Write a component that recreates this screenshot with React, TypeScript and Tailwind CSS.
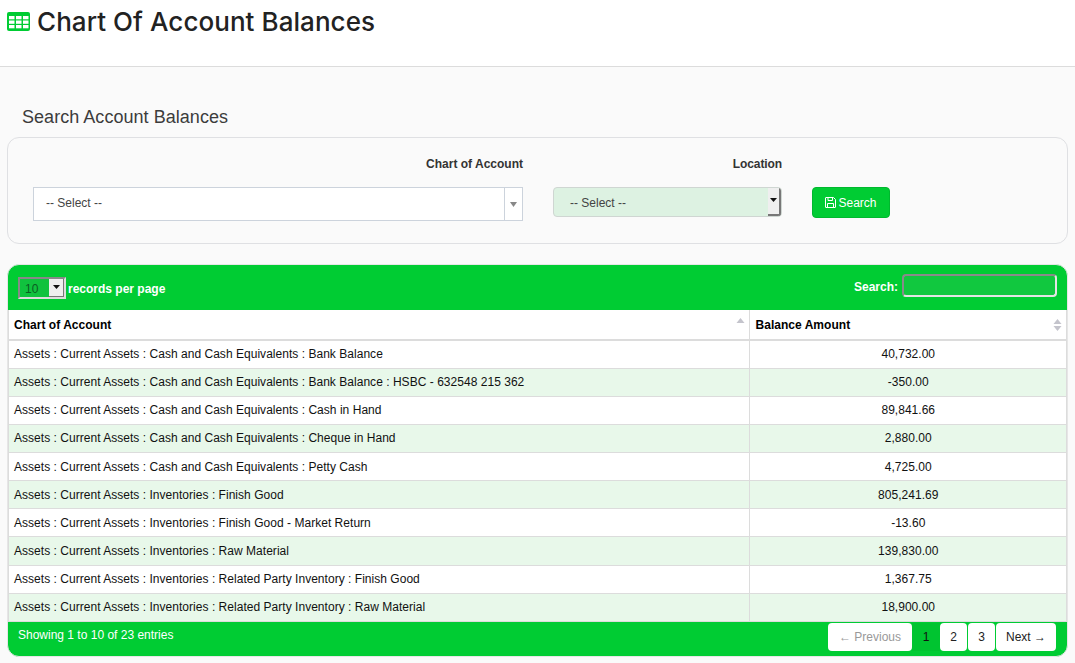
import React from "react";

const ROWS = [
  ["Assets : Current Assets : Cash and Cash Equivalents : Bank Balance", "40,732.00"],
  ["Assets : Current Assets : Cash and Cash Equivalents : Bank Balance : HSBC - 632548 215 362", "-350.00"],
  ["Assets : Current Assets : Cash and Cash Equivalents : Cash in Hand", "89,841.66"],
  ["Assets : Current Assets : Cash and Cash Equivalents : Cheque in Hand", "2,880.00"],
  ["Assets : Current Assets : Cash and Cash Equivalents : Petty Cash", "4,725.00"],
  ["Assets : Current Assets : Inventories : Finish Good", "805,241.69"],
  ["Assets : Current Assets : Inventories : Finish Good - Market Return", "-13.60"],
  ["Assets : Current Assets : Inventories : Raw Material", "139,830.00"],
  ["Assets : Current Assets : Inventories : Related Party Inventory : Finish Good", "1,367.75"],
  ["Assets : Current Assets : Inventories : Related Party Inventory : Raw Material", "18,900.00"],
];

const TableIcon = () => (
  <svg width="23" height="19" viewBox="0 0 23 19" className="shrink-0 -mt-[1px]">
    <rect x="0" y="0" width="23" height="19" rx="2" fill="#00cc33" />
    <g fill="#fff">
      {[4, 8.5, 13].map((y) =>
        [2, 9, 16].map((x) => <rect key={`${x}-${y}`} x={x} y={y} width="5.5" height="3.3" />)
      )}
    </g>
  </svg>
);

const SaveIcon = () => (
  <svg width="11" height="11" viewBox="0 0 11 11" fill="none" stroke="#fff" strokeWidth="1" className="mr-[2px]">
    <path d="M1 .5h7.5L10.5 2.5V10a.5.5 0 0 1-.5.5H1a.5.5 0 0 1-.5-.5V1A.5.5 0 0 1 1 .5Z" />
    <path d="M3 .5v3h4.5v-3M2.5 10.5V6.5h6v4" />
  </svg>
);

const SortBoth = () => (
  <svg width="9" height="14" viewBox="0 0 9 14" className="shrink-0">
    <path d="M4.5 1 8.5 6h-8Z" fill="#c4c4cc" />
    <path d="M4.5 13 .5 8h8Z" fill="#c4c4cc" />
  </svg>
);

const SortUp = () => (
  <svg width="9" height="5" viewBox="0 0 9 5" className="shrink-0 mb-[8px]">
    <path d="M4.5 0 8.5 5h-8Z" fill="#c4c4cc" />
  </svg>
);

const App: React.FC = () => {
  return (
    <div className="w-[1075px] h-[663px] overflow-hidden bg-[#fafafa] text-[12px] text-[#333] font-['Liberation_Sans',Arial,sans-serif]">
      {/* Title bar */}
      <div className="h-[67px] bg-white border-b border-[#dcdcdc] pl-[7px] pt-[6px] flex items-start">
        <div className="flex items-center gap-[7px] h-[32px]">
          <TableIcon />
          <h1 className="text-[26px] leading-[32px] text-[#222] font-['Inter',sans-serif] font-medium tracking-[0.06px]">
            Chart Of Account Balances
          </h1>
        </div>
      </div>

      <div className="px-[7px]">
        <h2 className="pl-[15px] pt-[38px] text-[18px] leading-[24px] text-[#3c3c3c] tracking-[0.04px]">Search Account Balances</h2>

        {/* Search form */}
        <div className="mt-[8px] h-[107px] rounded-[12px] border border-[#dfe0e3] bg-[#fafafa] pl-[25px] pt-[19px]">
          <div className="flex">
            <div className="w-[490px]">
              <div className="text-right font-bold text-[#333] leading-[14px]">Chart of Account</div>
              <div className="mt-[16px] h-[34px] w-[490px] flex bg-white border border-[#ccd3dc]">
                <div className="flex-1 pl-[12px] leading-[30px] text-[#444]">-- Select --</div>
                <div className="w-[18px] border-l border-[#ccd3dc] flex items-center justify-center">
                  <svg width="7" height="5" viewBox="0 0 7 5"><path d="M0 0h7L3.5 5Z" fill="#888" /></svg>
                </div>
              </div>
            </div>
            <div className="ml-[30px] w-[229px]">
              <div className="text-right font-bold text-[#333] leading-[14px] tracking-[-0.1px]">Location</div>
              <div className="mt-[16px] h-[30px] w-[229px] flex rounded-[4px] overflow-hidden bg-[#ddf2e2] border border-[#cfd6d2]">
                <div className="flex-1 pl-[16px] leading-[30px] text-[#444]">-- Select --</div>
                <div className="w-[13px] bg-[#efefef] border-r-2 border-b-2 border-[#777] flex justify-center pt-[10px]">
                  <svg width="7" height="4" viewBox="0 0 7 4"><path d="M0 0h7L3.5 4Z" fill="#111" /></svg>
                </div>
              </div>
            </div>
            <div className="ml-[30px] mt-[30px] h-[31px] w-[78px] rounded-[4px] bg-[#00cc33] border border-[#00b82e] flex items-center justify-center text-white">
              <SaveIcon />
              Search
            </div>
          </div>
        </div>

        {/* Table panel */}
        <div className="mt-[20px] h-[393px] rounded-[12px] bg-[#00cc33] border border-[#e6e6e6] overflow-hidden">
          <div className="h-[45px] flex items-center justify-between pl-[10px] pr-[10px] font-bold text-white">
            <div className="flex items-center gap-[2px]">
              <div className="w-[48px] h-[22px] flex border-2 border-t-[#888] border-l-[#888] border-r-[#ddd] border-b-[#ddd] bg-[#10c23e]">
                <div className="flex-1 pl-[5px] leading-[20px] font-normal text-[#0b5c22]">10</div>
                <div className="w-[15px] bg-[#efefef] border-r border-b border-[#777] flex items-center justify-center">
                  <svg width="7" height="4" viewBox="0 0 7 4"><path d="M0 0h7L3.5 4Z" fill="#111" /></svg>
                </div>
              </div>
              <span className="mt-[2px]">records per page</span>
            </div>
            <div className="flex items-center gap-[4px] -mt-[4px]">
              <span className="mt-[2px]">Search:</span>
              <div className="w-[155px] h-[23px] rounded-[4px] bg-[#11c83f] border-2 border-t-[#8a8a8a] border-l-[#8a8a8a] border-r-[#e4e4e4] border-b-[#e4e4e4]" />
            </div>
          </div>

          <div className="border-x border-[#dcdcdc]">
            <table className="w-full border-collapse table-fixed text-black bg-white [text-rendering:optimizeSpeed] tracking-[0.03px]">
              <colgroup>
                <col className="w-[740px]" />
                <col />
              </colgroup>
              <thead>
                <tr className="h-[30px] border-b-2 border-[#dcdcdc]">
                  <th className="p-0 pl-[5px] pr-[4px] border-r border-[#dcdcdc] text-left">
                    <div className="flex items-center justify-between">Chart of Account<SortUp /></div>
                  </th>
                  <th className="p-0 pl-[6px] pr-[4px] text-left">
                    <div className="flex items-center justify-between">Balance Amount<SortBoth /></div>
                  </th>
                </tr>
              </thead>
              <tbody>
                {ROWS.map(([name, amount], i) => (
                  <tr key={name} className={`h-[28.14px] border-b border-[#dcdcdc] ${i % 2 ? "bg-[#e8f8ea]" : "bg-white"}`}>
                    <td className="p-0 pl-[5px] border-r border-[#dcdcdc] text-[#111]">{name}</td>
                    <td className="p-0 pl-[1px] text-center text-[#111]">{amount}</td>
                  </tr>
                ))}
              </tbody>
            </table>
          </div>

          <div className="flex justify-between pl-[10px] pr-[11px] pt-[1px] text-white">
            <div className="pt-[5px] leading-[14px]">Showing 1 to 10 of 23 entries</div>
            <div className="flex items-start text-[12px]">
              <div className="w-[84px] h-[28px] rounded-[4px] bg-white text-[#999] flex items-center justify-center">← Previous</div>
              <div className="w-[28px] h-[28px] bg-[#00c430] text-[#111] flex items-center justify-center">1</div>
              <div className="w-[27px] h-[28px] mr-[1px] rounded-[4px] bg-white text-[#222] flex items-center justify-center">2</div>
              <div className="w-[27px] h-[28px] mr-[1px] rounded-[4px] bg-white text-[#222] flex items-center justify-center">3</div>
              <div className="w-[60px] h-[28px] rounded-[4px] bg-white text-[#222] flex items-center justify-center">Next →</div>
            </div>
          </div>
        </div>
      </div>
    </div>
  );
};

export default App;
